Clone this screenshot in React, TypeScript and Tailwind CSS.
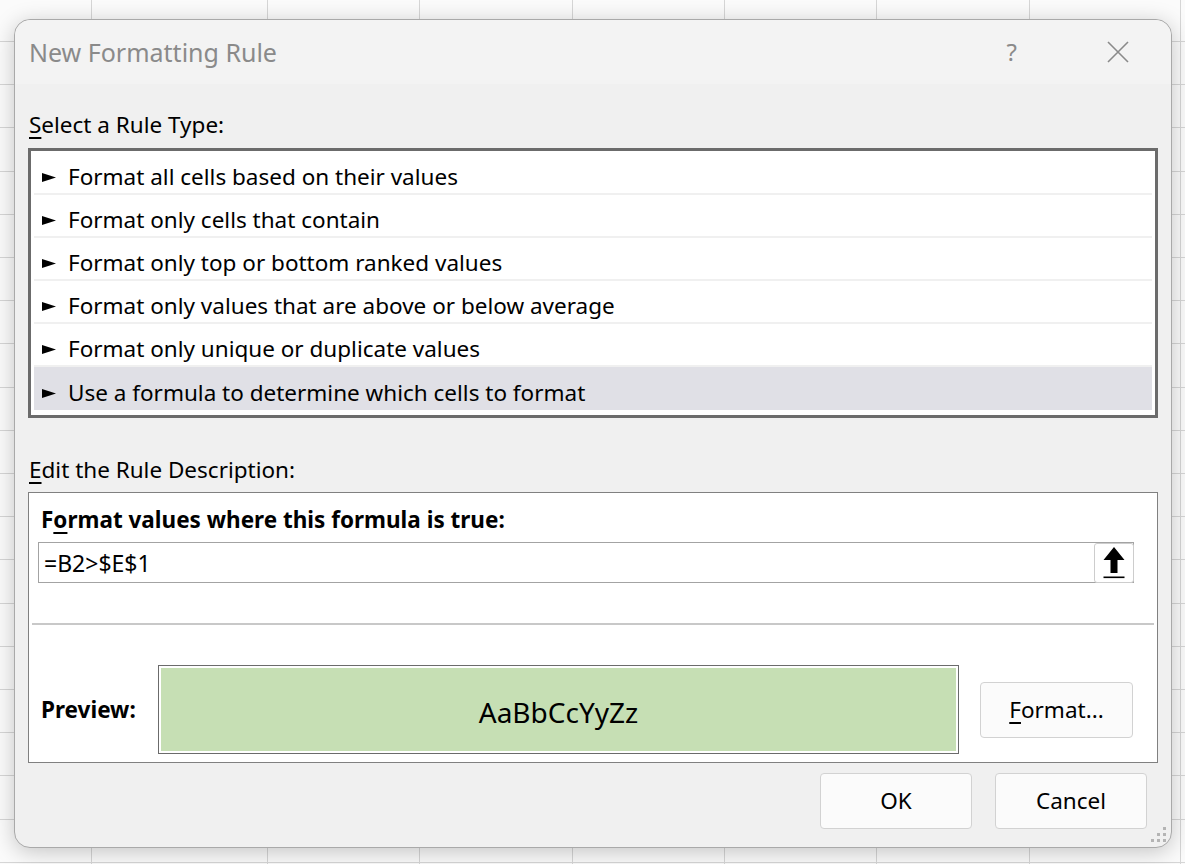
import React from "react";

// Excel "New Formatting Rule" dialog over a faint worksheet grid.
const RULES = [
  "Format all cells based on their values",
  "Format only cells that contain",
  "Format only top or bottom ranked values",
  "Format only values that are above or below average",
  "Format only unique or duplicate values",
  "Use a formula to determine which cells to format",
];

const COLS = [91, 267, 419, 572, 724, 876, 1029, 1180];
const ROWS = Array.from({ length: 20 }, (_, i) => Math.round(41 + i * 43.2));

function Grid() {
  return (
    <svg className="absolute inset-0" width={1185} height={864}>
      {COLS.map((x) => (
        <line key={"c" + x} x1={x + 0.5} y1={0} x2={x + 0.5} y2={864} stroke="#d6d6d6" />
      ))}
      {ROWS.map((y) => (
        <line key={"r" + y} x1={0} y1={y + 0.5} x2={1185} y2={y + 0.5} stroke="#d6d6d6" />
      ))}
    </svg>
  );
}

function Pointer() {
  return (
    <svg width="14" height="9" viewBox="0 0 14 9" className="mr-[12px] shrink-0">
      <polygon points="0,0 14,4.5 0,9" fill="#000" />
    </svg>
  );
}

function Btn({ children, className = "" }: { children: React.ReactNode; className?: string }) {
  return (
    <button
      className={
        "flex h-[56px] w-[152px] items-center justify-center rounded-[4px] border border-[#d2d2d2] bg-[#fbfbfb] text-[22.5px] text-black " +
        className
      }
    >
      {children}
    </button>
  );
}

export default function App() {
  return (
    <div className="relative h-[864px] w-[1185px] overflow-hidden bg-[#fbfbfb] font-['Noto_Sans',sans-serif] leading-[28px] text-black">
      <Grid />
      <div className="relative ml-[14px] mt-[19px] w-[1158px] rounded-[16px] border border-[#a9a9a9] bg-[#f0f0f0] pb-[18px] shadow-[0_4px_22px_rgba(0,0,0,0.22)]">
        {/* title bar */}
        <div className="flex h-[64px] items-center rounded-t-[16px] bg-[#f3f3f3] pl-[14px]">
          <span className="text-[25px] text-[#8a8a8a]">New Formatting Rule</span>
          <span className="ml-auto mr-[90px] text-[24px] text-[#8a8a8a]">?</span>
          <svg width="22" height="22" viewBox="0 0 22 22" className="mr-[42px]">
            <path d="M1 1 L21 21 M21 1 L1 21" stroke="#8a8a8a" strokeWidth="1.6" />
          </svg>
        </div>

        <div className="px-[13px]">
          <div className="mt-[27px] pl-[1px] text-[22.5px]">
            <u className="underline-offset-[4px]">S</u>elect a Rule Type:
          </div>

          <div className="mt-[9px] border-[3px] border-[#6b6b6b] bg-white px-[3px] pb-[5px] pt-[1px]">
            {RULES.map((r, i) => {
              const last = i === RULES.length - 1;
              return (
                <div
                  key={r}
                  className={
                    "flex h-[43px] items-center pl-[8px] pt-[9px] text-[22.5px] " +
                    (last ? "bg-[#e0e0e6]" : "border-b-2 border-[#f0f0f0]")
                  }
                >
                  <Pointer />
                  <span>{r}</span>
                </div>
              );
            })}
          </div>

          <div className="mt-[38px] pl-[1px] text-[22.5px]">
            <u className="underline-offset-[4px]">E</u>dit the Rule Description:
          </div>

          <div className="mt-[8px] border border-[#808080] bg-white pb-[8px] pt-[13px]">
            <div className="pl-[12px] text-[22.5px] font-bold">
              F<u className="underline-offset-[4px]">o</u>rmat values where this formula is true:
            </div>
            <div className="ml-[9px] mr-[23px] mt-[8px] flex h-[41px] items-center border border-[#a3a3a3] pl-[5px]">
              <span className="text-[23px]">=B2&gt;$E$1</span>
              <div className="-mr-px ml-auto flex h-[40px] w-[40px] items-center justify-center rounded-[3px] border border-[#cdcdcd] bg-white">
                <svg width="22" height="32" viewBox="0 0 22 32">
                  <polygon points="11,0 21.5,13 14.5,13 14.5,26 7.5,26 7.5,13 0.5,13" fill="#000" />
                  <rect x="0.5" y="29.5" width="21" height="1.6" fill="#000" />
                </svg>
              </div>
            </div>
            <div className="mx-[3px] mt-[40px] h-[2px] bg-[#c8c8c8]" />
            <div className="mt-[40px] flex items-center">
              <div className="w-[129px] pl-[12px] text-[22.5px] font-bold">Preview:</div>
              <div className="h-[89px] w-[801px] border border-[#6b6b6b] bg-white p-[2px]">
                <div className="flex h-full items-center justify-center bg-[#c6dfb4] pt-[4px] text-[28px]">
                  AaBbCcYyZz
                </div>
              </div>
              <Btn className="ml-[21px] w-[153px] text-[21.5px]">
                <span>
                  <u className="underline-offset-[4px]">F</u>ormat...
                </span>
              </Btn>
            </div>
          </div>

          <div className="mt-[10px] flex justify-end gap-[23px] pr-[11px]">
            <Btn>OK</Btn>
            <Btn>Cancel</Btn>
          </div>
        </div>

        {/* resize grip */}
        <div className="absolute bottom-[5px] right-[5px] grid grid-cols-3 gap-[3px]">
          <span />
          <span />
          <span className="h-[3px] w-[3px] bg-[#b4b4b4]" />
          <span />
          <span className="h-[3px] w-[3px] bg-[#b4b4b4]" />
          <span className="h-[3px] w-[3px] bg-[#b4b4b4]" />
          <span className="h-[3px] w-[3px] bg-[#b4b4b4]" />
          <span className="h-[3px] w-[3px] bg-[#b4b4b4]" />
          <span className="h-[3px] w-[3px] bg-[#b4b4b4]" />
        </div>
      </div>
    </div>
  );
}
